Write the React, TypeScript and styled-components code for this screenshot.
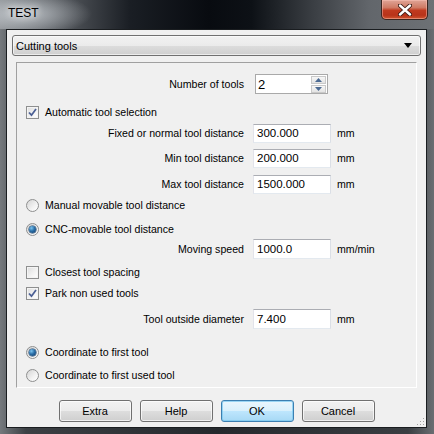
import React from "react";
import styled, { createGlobalStyle } from "styled-components";

const Global = createGlobalStyle`
  html, body { margin: 0; padding: 0; background: #000; }
  body { font-family: "Liberation Sans", Arial, sans-serif; font-size: 10.6px; color: #000; }
  * { box-sizing: border-box; }
`;

const Window = styled.div`
  width: 434px;
  height: 434px;
  display: flex;
  flex-direction: column;
  background: linear-gradient(90deg, #75797d 0%, #3c4044 6%, #25292d 50%, #3a3e42 94%, #6a6e72 100%);
  position: relative;
  overflow: hidden;
`;

const TitleBar = styled.div`
  height: 29px;
  flex: none;
  display: flex;
  align-items: flex-start;
  justify-content: space-between;
  background:
    radial-gradient(ellipse 70px 22px at 22px 14px, rgba(200,205,210,0.85), rgba(200,205,210,0) 100%),
    linear-gradient(90deg, #8a8e92 0%, #5d6166 12%, #1a1e24 30%, #080b10 48%, #0d1116 58%, #3a3e43 72%, #62666b 85%, #6d7175 100%);
`;

const Title = styled.div`
  margin: 6px 0 0 8px;
  font-family: "Segoe UI", "Liberation Sans", Arial, sans-serif;
  font-size: 12px;
  color: #000;
  text-shadow: 0 0 6px rgba(255,255,255,0.9), 0 0 10px rgba(255,255,255,0.7);
`;

const CloseButton = styled.div`
  width: 47px;
  height: 20px;
  margin-right: 6px;
  border: 1px solid #3b2620;
  border-top: none;
  border-radius: 0 0 5px 5px;
  box-shadow: inset 0 0 0 1px rgba(255,200,190,0.45);
  background: linear-gradient(180deg, #e0a597 0%, #cf7a64 40%, #c03a1f 55%, #b8331a 80%, #d0562f 100%);
  display: flex;
  align-items: center;
  justify-content: center;
`;

const ClientWrap = styled.div`
  flex: 1;
  display: flex;
  padding: 0 7px 6px 6px;
`;

const Client = styled.div`
  flex: 1;
  background: #f0f0f0;
  border: 1px solid #1a1d20;
  display: flex;
  flex-direction: column;
  position: relative;
`;

const Combo = styled.div`
  margin: 5px 5px 0 5px;
  height: 21px;
  border: 1px solid #707070;
  border-radius: 3px;
  background: linear-gradient(180deg, #f2f2f2 0%, #ebebeb 50%, #dddddd 51%, #cfcfcf 100%);
  box-shadow: inset 0 0 0 1px rgba(255,255,255,0.6);
  display: flex;
  align-items: center;
  justify-content: space-between;
  padding: 0 8px 0 3px;
`;

const Panel = styled.div`
  margin: 6px 9px 0 9px;
  height: 326px;
  border: 1px solid;
  border-color: #a0a0a0 #ffffff #ffffff #a0a0a0;
  display: flex;
  flex-direction: column;
`;

const Row = styled.div<{ $mt: number }>`
  height: 20px;
  margin-top: ${(p) => p.$mt}px;
  display: flex;
  align-items: center;
`;

const FieldLabel = styled.div`
  width: 227px;
  text-align: right;
  white-space: nowrap;
`;

const TextInput = styled.div<{ $h?: number }>`
  width: 78px;
  height: ${(p) => p.$h ?? 20}px;
  margin-left: 9px;
  background: #fff;
  border: 1px solid;
  border-color: #abadb3 #dbdfe6 #e3e9ef #e2e3ea;
  display: flex;
  align-items: center;
  padding-left: 3px;
  font-size: 11.5px;
`;

const Unit = styled.div`
  margin-left: 6px;
`;

const Spinner = styled.div`
  width: 73px;
  height: 20px;
  margin-left: 11px;
  background: #fff;
  border: 1px solid #a9a9a9;
  display: flex;
  align-items: center;
  justify-content: space-between;
  padding: 1px 1px 1px 2px;
  font-size: 13px;
`;

const SpinCol = styled.div`
  width: 15px;
  height: 17px;
  display: flex;
  flex-direction: column;
  gap: 1px;
`;

const SpinBtn = styled.div`
  flex: 1;
  border: 1px solid #c9c9c9;
  background: linear-gradient(180deg, #f7f7f7, #e3e3e3);
  display: flex;
  align-items: center;
  justify-content: center;
`;

const Option = styled.div<{ $mt: number }>`
  height: 20px;
  margin-top: ${(p) => p.$mt}px;
  padding-left: 9px;
  display: flex;
  align-items: center;
  gap: 6px;
`;

const Box = styled.div`
  width: 13px;
  height: 13px;
  border: 1px solid #8e8f8f;
  background: linear-gradient(135deg, #dcdcdc 0%, #f4f4f4 60%, #ffffff 100%);
  box-shadow: inset 0 0 0 1px #f4f4f4;
  display: flex;
  align-items: center;
  justify-content: center;
`;

const Radio = styled.div<{ $on?: boolean }>`
  width: 13px;
  height: 13px;
  border-radius: 50%;
  border: 1px solid #8e8f8f;
  background: linear-gradient(135deg, #d4d4d4 0%, #f2f2f2 60%, #ffffff 100%);
  display: flex;
  align-items: center;
  justify-content: center;
  &::after {
    content: "";
    display: ${(p) => (p.$on ? "block" : "none")};
    width: 7px;
    height: 7px;
    border-radius: 50%;
    background: radial-gradient(circle at 35% 30%, #7cc4ef 0%, #2a6fa8 45%, #0e3563 100%);
    box-shadow: 0 0 0 0.5px #163a60;
  }
`;

const ButtonBar = styled.div`
  margin-top: 12px;
  display: flex;
  justify-content: center;
  gap: 8px;
`;

const Button = styled.div<{ $default?: boolean }>`
  width: 73px;
  height: 22px;
  border: 1px solid ${(p) => (p.$default ? "#3c7fb1" : "#707070")};
  border-radius: 3px;
  background: ${(p) =>
    p.$default
      ? "linear-gradient(180deg, #eaf6fd 0%, #d9f0fc 50%, #bee6fd 51%, #a7d9f5 100%)"
      : "linear-gradient(180deg, #f2f2f2 0%, #ebebeb 50%, #dddddd 51%, #cfcfcf 100%)"};
  box-shadow: inset 0 0 0 1px ${(p) => (p.$default ? "rgba(120,200,240,0.7)" : "rgba(255,255,255,0.7)")};
  display: flex;
  align-items: center;
  justify-content: center;
  font-size: 11px;
`;

const ComboText = styled.span`
  font-size: 11px;
`;

const Grip = styled.svg`
  position: absolute;
  right: 1px;
  bottom: 1px;
`;

const Check = () => (
  <svg width="9" height="9" viewBox="0 0 9 9">
    <path d="M1 4.5 L3.5 7.2 L8 1" fill="none" stroke="#4b5f94" strokeWidth="1.8" />
  </svg>
);

const Arrow = ({ up }: { up?: boolean }) => (
  <svg width="7" height="4" viewBox="0 0 7 4">
    <path d={up ? "M0 4 L3.5 0 L7 4 Z" : "M0 0 L3.5 4 L7 0 Z"} fill="#4c6a92" />
  </svg>
);

export default function App() {
  return (
    <>
      <Global />
      <Window>
        <TitleBar>
          <Title>TEST</Title>
          <CloseButton>
            <svg width="14" height="12" viewBox="0 0 14 12">
              <path d="M2 1.5 L12 10.5 M12 1.5 L2 10.5" stroke="#3a1a14" strokeWidth="4.2" strokeLinecap="round" />
              <path d="M2 1.5 L12 10.5 M12 1.5 L2 10.5" stroke="#ffffff" strokeWidth="2.4" strokeLinecap="round" />
            </svg>
          </CloseButton>
        </TitleBar>
        <ClientWrap>
          <Client>
            <Combo>
              <ComboText>Cutting tools</ComboText>
              <svg width="8" height="5" viewBox="0 0 8 5">
                <path d="M0 0 L8 0 L4 5 Z" fill="#000" />
              </svg>
            </Combo>
            <Panel>
              <Row $mt={11}>
                <FieldLabel>Number of tools</FieldLabel>
                <Spinner>
                  <span>2</span>
                  <SpinCol>
                    <SpinBtn><Arrow up /></SpinBtn>
                    <SpinBtn><Arrow /></SpinBtn>
                  </SpinCol>
                </Spinner>
              </Row>
              <Option $mt={8}>
                <Box><Check /></Box>
                <span>Automatic tool selection</span>
              </Option>
              <Row $mt={1}>
                <FieldLabel>Fixed or normal tool distance</FieldLabel>
                <TextInput $h={19}>300.000</TextInput>
                <Unit>mm</Unit>
              </Row>
              <Row $mt={5}>
                <FieldLabel>Min tool distance</FieldLabel>
                <TextInput $h={19}>200.000</TextInput>
                <Unit>mm</Unit>
              </Row>
              <Row $mt={6}>
                <FieldLabel>Max tool distance</FieldLabel>
                <TextInput $h={19}>1500.000</TextInput>
                <Unit>mm</Unit>
              </Row>
              <Option $mt={1}>
                <Radio />
                <span>Manual movable tool distance</span>
              </Option>
              <Option $mt={4}>
                <Radio $on />
                <span>CNC-movable tool distance</span>
              </Option>
              <Row $mt={0}>
                <FieldLabel>Moving speed</FieldLabel>
                <TextInput>1000.0</TextInput>
                <Unit>mm/min</Unit>
              </Row>
              <Option $mt={3}>
                <Box />
                <span>Closest tool spacing</span>
              </Option>
              <Option $mt={1}>
                <Box><Check /></Box>
                <span>Park non used tools</span>
              </Option>
              <Row $mt={6}>
                <FieldLabel>Tool outside diameter</FieldLabel>
                <TextInput>7.400</TextInput>
                <Unit>mm</Unit>
              </Row>
              <Option $mt={13}>
                <Radio $on />
                <span>Coordinate to first tool</span>
              </Option>
              <Option $mt={3}>
                <Radio />
                <span>Coordinate to first used tool</span>
              </Option>
            </Panel>
            <ButtonBar>
              <Button>Extra</Button>
              <Button>Help</Button>
              <Button $default>OK</Button>
              <Button>Cancel</Button>
            </ButtonBar>
            <Grip width="10" height="10" viewBox="0 0 10 10">
              {[
                [8, 2], [8, 5], [5, 5], [8, 8], [5, 8], [2, 8],
              ].map(([x, y], i) => (
                <rect key={i} x={x} y={y} width="1" height="1" fill="#a0a0a0" />
              ))}
            </Grip>
          </Client>
        </ClientWrap>
      </Window>
    </>
  );
}
